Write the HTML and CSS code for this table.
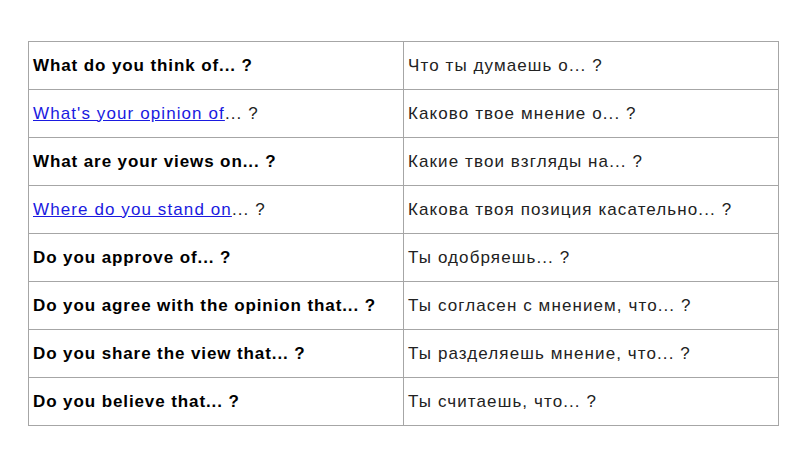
FILE: index.html
```html
<!DOCTYPE html>
<html>
<head>
<meta charset="utf-8">
<link rel="stylesheet" href="styles.css">
</head>
<body>
<div class="page">
<table class="phrases">
<tr><td class="en"><b>What do you think of... ?</b></td><td class="ru">Что ты думаешь о... ?</td></tr>
<tr><td class="en"><a href="#">What's your opinion of</a>... ?</td><td class="ru">Каково твое мнение о... ?</td></tr>
<tr><td class="en"><b>What are your views on... ?</b></td><td class="ru">Какие твои взгляды на... ?</td></tr>
<tr><td class="en"><a href="#">Where do you stand on</a>... ?</td><td class="ru">Какова твоя позиция касательно... ?</td></tr>
<tr><td class="en"><b>Do you approve of... ?</b></td><td class="ru">Ты одобряешь... ?</td></tr>
<tr><td class="en"><b>Do you agree with the opinion that... ?</b></td><td class="ru">Ты согласен с мнением, что... ?</td></tr>
<tr><td class="en"><b>Do you share the view that... ?</b></td><td class="ru">Ты разделяешь мнение, что... ?</td></tr>
<tr><td class="en"><b>Do you believe that... ?</b></td><td class="ru">Ты считаешь, что... ?</td></tr>
</table>
</div>
</body>
</html>
```
FILE: styles.css
```css
html, body {
  margin: 0;
  padding: 0;
  background: #ffffff;
}
.page {
  padding: 41px 0 0 28px;
}
.phrases {
  border-collapse: collapse;
  width: 751px;
  table-layout: fixed;
  font-family: "Liberation Sans", Arial, sans-serif;
  font-size: 17px;
  letter-spacing: 1.1px;
  color: #222222;
}
.phrases td {
  border: 1px solid #a6a6a6;
  height: 48px;
  padding: 0 4px;
  box-sizing: border-box;
  vertical-align: middle;
  white-space: nowrap;
}
.phrases td.en {
  width: 375px;
}
.phrases b {
  color: #000000;
  font-weight: bold;
  letter-spacing: 0.9px;
}
.phrases a {
  color: #1a1ae0;
  text-decoration: underline;
}
```
